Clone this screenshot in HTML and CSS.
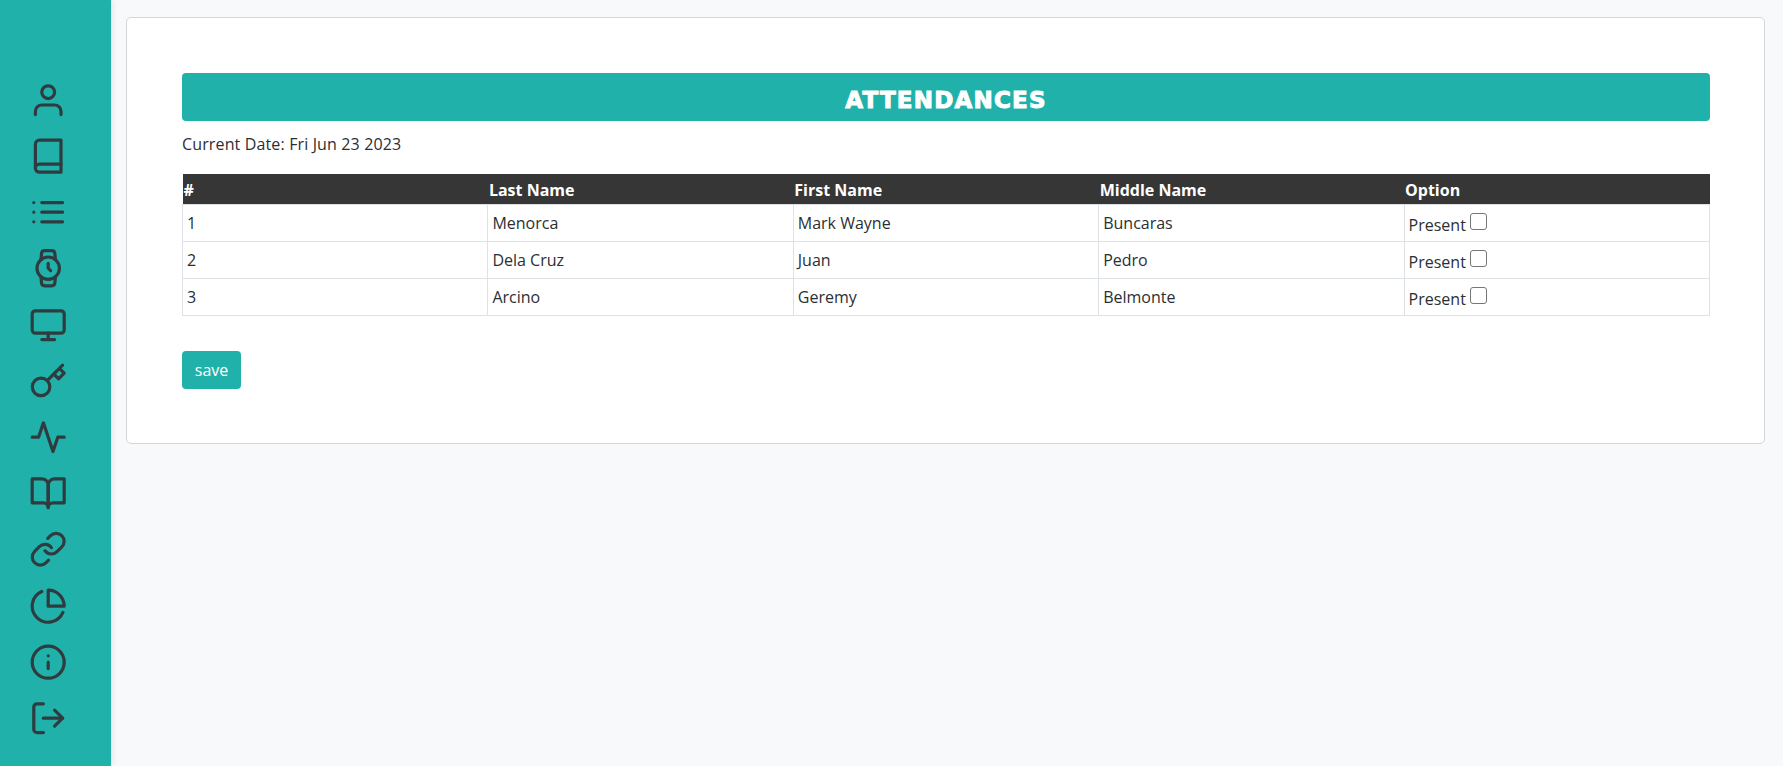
FILE: index.html
```html
<!DOCTYPE html>
<html lang="en">
<head>
  <meta charset="UTF-8" />
  <title>Attendances</title>
  <link rel="stylesheet" href="styles.css">
</head>
<body>
  <nav class="sidebar">
    <a class="nav-icon"><svg viewBox="0 0 24 24"><path d="M20 21v-2a4 4 0 0 0-4-4H8a4 4 0 0 0-4 4v2"/><circle cx="12" cy="7" r="4"/></svg></a>
    <a class="nav-icon"><svg viewBox="0 0 24 24"><path d="M4 19.5A2.5 2.5 0 0 1 6.5 17H20"/><path d="M6.5 2H20v20H6.5A2.5 2.5 0 0 1 4 19.5v-15A2.5 2.5 0 0 1 6.5 2z"/></svg></a>
    <a class="nav-icon"><svg viewBox="0 0 24 24"><path d="M8 6h13M8 12h13M8 18h13M3 6h.01M3 12h.01M3 18h.01"/></svg></a>
    <a class="nav-icon"><svg viewBox="0 0 24 24"><circle cx="12" cy="12" r="7"/><polyline points="12 9 12 12 13.5 13.5"/><path d="M16.51 17.35l-.35 3.83a2 2 0 0 1-2 1.82H9.83a2 2 0 0 1-2-1.82l-.35-3.83m.01-10.7l.35-3.83A2 2 0 0 1 9.83 1h4.33a2 2 0 0 1 2 1.82l.35 3.83"/></svg></a>
    <a class="nav-icon"><svg viewBox="0 0 24 24"><rect x="2" y="3" width="20" height="14" rx="2" ry="2"/><path d="M8 21h8M12 17v4"/></svg></a>
    <a class="nav-icon"><svg viewBox="0 0 24 24"><path d="M21 2l-2 2m-7.610 7.610a5.500 5.500 0 1 1-7.778 7.778 5.500 5.500 0 0 1 7.777-7.777zm0 0L15.500 7.500m0 0l3 3L22 7l-3-3m-3.500 3.500L19 4"/></svg></a>
    <a class="nav-icon"><svg viewBox="0 0 24 24"><polyline points="22 12 18 12 15 21 9 3 6 12 2 12"/></svg></a>
    <a class="nav-icon"><svg viewBox="0 0 24 24"><path d="M2 3h6a4 4 0 0 1 4 4v14a3 3 0 0 0-3-3H2z"/><path d="M22 3h-6a4 4 0 0 0-4 4v14a3 3 0 0 1 3-3h7z"/></svg></a>
    <a class="nav-icon"><svg viewBox="0 0 24 24"><path d="M10 13a5 5 0 0 0 7.540.540l3-3a5 5 0 0 0-7.070-7.070l-1.720 1.710"/><path d="M14 11a5 5 0 0 0-7.540-.540l-3 3a5 5 0 0 0 7.070 7.070l1.710-1.710"/></svg></a>
    <a class="nav-icon"><svg viewBox="0 0 24 24"><path d="M21.210 15.890A10 10 0 1 1 8 2.830"/><path d="M22 12A10 10 0 0 0 12 2v10z"/></svg></a>
    <a class="nav-icon"><svg viewBox="0 0 24 24"><circle cx="12" cy="12" r="10"/><path d="M12 16v-4M12 8h.01"/></svg></a>
    <a class="nav-icon"><svg viewBox="0 0 24 24"><path d="M9 21H5a2 2 0 0 1-2-2V5a2 2 0 0 1 2-2h4"/><polyline points="16 17 21 12 16 7"/><path d="M21 12H9"/></svg></a>
  </nav>

  <main class="content">
    <section class="card">
      <h1 class="title">ATTENDANCES</h1>
      <p class="date">Current Date: Fri Jun 23 2023</p>
      <form>
        <table class="roster">
          <thead>
            <tr><th>#</th><th>Last Name</th><th>First Name</th><th>Middle Name</th><th>Option</th></tr>
          </thead>
          <tbody>
            <tr><td>1</td><td>Menorca</td><td>Mark Wayne</td><td>Buncaras</td><td class="option">Present <input type="checkbox"></td></tr>
            <tr><td>2</td><td>Dela Cruz</td><td>Juan</td><td>Pedro</td><td class="option">Present <input type="checkbox"></td></tr>
            <tr><td>3</td><td>Arcino</td><td>Geremy</td><td>Belmonte</td><td class="option">Present <input type="checkbox"></td></tr>
          </tbody>
        </table>
        <button type="submit" class="save">save</button>
      </form>
    </section>
  </main>
</body>
</html>
```

FILE: styles.css
```css
* {
  box-sizing: border-box;
}
html, body {
  height: 100%;
}
body {
  margin: 0;
  display: flex;
  background: #f8f9fa;
  font-family: "Open Sans", "Noto Sans", sans-serif;
  font-size: 16px;
  color: #2b2f33;
  overflow: hidden;
}
.sidebar {
  flex: 0 0 111px;
  height: 766px;
  padding: 72px 0 0 29px;
  background: #20b2aa;
  box-shadow: 2px 0 6px rgba(0, 0, 0, 0.08);
  display: flex;
  flex-direction: column;
  align-items: flex-start;
}
.nav-icon {
  height: 56.2px;
  display: flex;
  align-items: center;
}
.nav-icon svg {
  width: 38.4px;
  height: 38.4px;
  fill: none;
  stroke: #2f3b3f;
  stroke-width: 2;
  stroke-linecap: round;
  stroke-linejoin: round;
}
.content {
  flex: 1;
  padding: 17px 18px 0 15px;
}
.card {
  background: #fff;
  border: 1px solid #d3d6da;
  border-radius: 5px;
  height: 427px;
  padding: 55px 54px 0 55px;
}
.title {
  margin: 0;
  height: 48px;
  line-height: 54px;
  background: #20b2aa;
  border-radius: 4px;
  text-align: center;
  color: #fff;
  font-family: "DejaVu Sans", sans-serif;
  font-size: 23px;
  font-weight: 700;
  letter-spacing: 1.2px;
  -webkit-text-stroke: 1px #fff;
}
.date {
  margin: 10px 0 17px;
  line-height: 26px;
  font-size: 16px;
  letter-spacing: 0.14px;
}
.roster {
  width: 100%;
  border-collapse: collapse;
  table-layout: fixed;
}
.roster th {
  height: 30px;
  padding: 2px 1px 0;
  background: #363636;
  color: #fff;
  text-align: left;
  font-weight: 700;
}
.roster td {
  height: 37px;
  padding: 0 4px;
  border: 1px solid #dee2e6;
}
.roster .option {
  padding-top: 4px;
}
.roster input {
  width: 17px;
  height: 17px;
  margin: 0;
  appearance: none;
  border: 1px solid #767676;
  border-radius: 3px;
  background: #fff;
  vertical-align: 1px;
}
.save {
  margin-top: 35px;
  display: block;
  width: 59px;
  height: 38px;
  border: none;
  border-radius: 4px;
  background: #20b2aa;
  color: #fff;
  font: 16px "Open Sans", "Noto Sans", sans-serif;
}
```
